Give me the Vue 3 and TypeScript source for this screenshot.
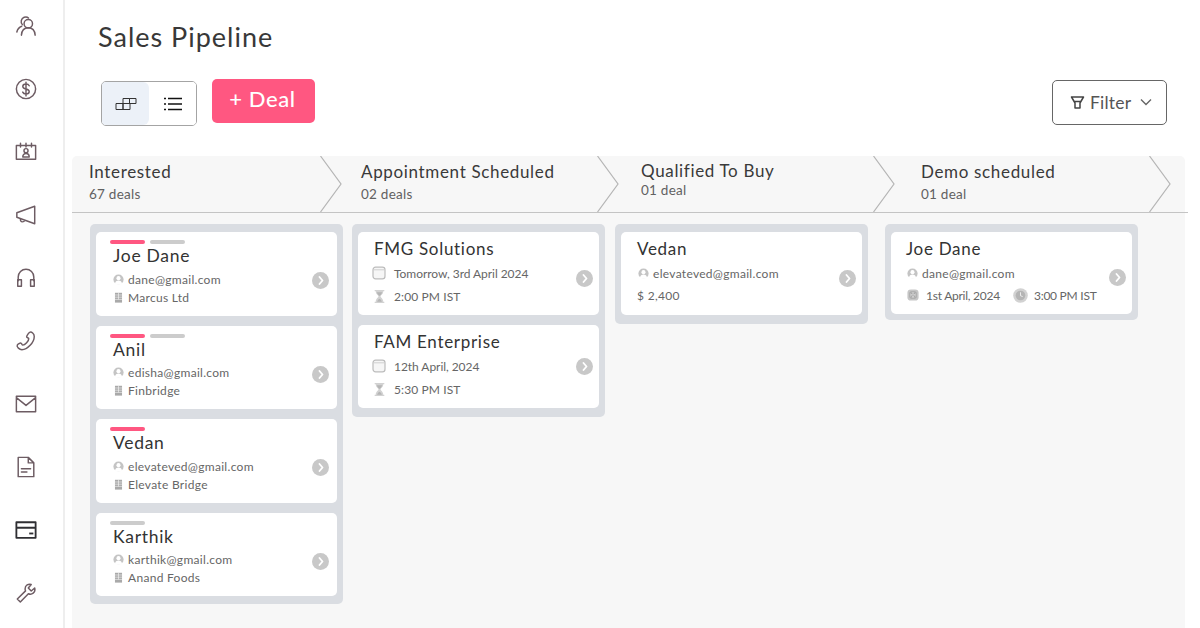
<script setup lang="ts">
type Row = { icon: string; text: string; icon2?: string; text2?: string }
type Card = { name: string; bars: string[]; rows: Row[]; arrow: number; gapped?: boolean }
type Column = { cls: string; cards: Card[] }

const navIcons = ['users', 'dollar', 'calendar', 'megaphone', 'headset', 'phone', 'mail', 'doc', 'card', 'wrench']

const stages = [
  { title: 'Interested', sub: '67 deals', cls: 's1' },
  { title: 'Appointment Scheduled', sub: '02 deals', cls: 's2' },
  { title: 'Qualified To Buy', sub: '01 deal', cls: 's3' },
  { title: 'Demo scheduled', sub: '01 deal', cls: 's4' }
]

const columns: Column[] = [
  {
    cls: 'c1',
    cards: [
      { name: 'Joe Dane', bars: ['pink', 'grey'], arrow: 32, rows: [{ icon: 'person', text: 'dane@gmail.com' }, { icon: 'building', text: 'Marcus Ltd' }] },
      { name: 'Anil', bars: ['pink', 'grey'], arrow: 32, rows: [{ icon: 'person', text: 'edisha@gmail.com' }, { icon: 'building', text: 'Finbridge' }] },
      { name: 'Vedan', bars: ['pink'], arrow: 32, rows: [{ icon: 'person', text: 'elevateved@gmail.com' }, { icon: 'building', text: 'Elevate Bridge' }] },
      { name: 'Karthik', bars: ['grey'], arrow: 32, rows: [{ icon: 'person', text: 'karthik@gmail.com' }, { icon: 'building', text: 'Anand Foods' }] }
    ]
  },
  {
    cls: 'c2',
    cards: [
      { name: 'FMG Solutions', bars: [], arrow: 31, gapped: true, rows: [{ icon: 'cal', text: 'Tomorrow, 3rd April 2024' }, { icon: 'glass', text: '2:00 PM IST' }] },
      { name: 'FAM Enterprise', bars: [], arrow: 26, gapped: true, rows: [{ icon: 'cal', text: '12th April, 2024' }, { icon: 'glass', text: '5:30 PM IST' }] }
    ]
  },
  {
    cls: 'c3',
    cards: [{ name: 'Vedan', bars: [], arrow: 31, rows: [{ icon: 'person', text: 'elevateved@gmail.com' }, { icon: 'none', text: '$ 2,400' }] }]
  },
  {
    cls: 'c4',
    cards: [{ name: 'Joe Dane', bars: [], arrow: 30, rows: [{ icon: 'person', text: 'dane@gmail.com' }, { icon: 'save', text: '1st April, 2024', icon2: 'clock', text2: '3:00 PM IST' }] }]
  }
]
</script>

<template>
  <div class="app">
    <nav class="side">
      <svg v-for="n in navIcons" :key="n" class="nav-icon" :class="{ dark: n === 'card' }" viewBox="0 0 24 24">
        <template v-if="n === 'users'">
          <circle cx="14.500" cy="9.500" r="4.600" /><path d="M7 22c.4-5 3.400-8 7.500-8s7.100 3 7.500 8" />
          <path d="M8 10.500A5 5 0 0 1 10 2.500c1.800-.7 3.500-.4 4.700.8M7.300 12.300c-2.800 1-4.500 3.200-5.300 6.200" />
        </template>
        <template v-else-if="n === 'dollar'">
          <circle cx="12" cy="12" r="10.500" /><path d="M15.500 8.500c-.6-1.300-2-2-3.500-2-2 0-3.500 1-3.500 2.700 0 3.800 7 1.800 7 5.600 0 1.700-1.500 2.700-3.500 2.700-1.600 0-3-.7-3.600-2.100M12 4.500v15" />
        </template>
        <template v-else-if="n === 'calendar'">
          <path d="M1.500 5h21v15h-21zM6 2.500v4M12 2.500v4M18 2.500v4" /><circle cx="12" cy="10.500" r="2.200" /><path d="M8.500 17.500c0-2.500 1.300-3.800 3.500-3.800s3.500 1.300 3.500 3.800z" />
        </template>
        <template v-else-if="n === 'megaphone'">
          <path d="M21.500 2.500v19L2 14.500v-5zM6 16c-.5 2 .5 3.500 2 3.500s2.300-.8 2.500-2" />
        </template>
        <template v-else-if="n === 'headset'">
          <path d="M3.500 15v-4a8.500 8.500 0 0 1 17 0v4" /><path d="M3 14h4v7H3zM17 14h4v7h-4z" />
        </template>
        <template v-else-if="n === 'phone'">
          <path d="M16 2.500c2-1 5 1.500 5 4.500 0 6.500-7.500 14.500-13.500 14.500-2.500 0-6-3-5-5 .6-1 3-2.500 4-2.200 1 .3 1 2.200 2 2.200 2.500 0 6.500-4.500 6.500-7 0-1-2.200-1-2.300-2C12.600 6.500 15 3 16 2.500z" />
        </template>
        <template v-else-if="n === 'mail'">
          <path d="M1.500 3.500h21v17h-21zM1.500 5l10.500 8.500L22.500 5" />
        </template>
        <template v-else-if="n === 'doc'">
          <path d="M3.500 1.500h11l6 6v15h-17zM14.500 1.500v6h6M7 14h10M7 17.500h6" />
        </template>
        <template v-else-if="n === 'card'">
          <path d="M1.500 3.500h21v17h-21zM1.500 9.500h21" /><path class="solid" d="M15.500 14.800h4.500v2h-4.500z" />
        </template>
        <template v-else>
          <path d="M21.500 6.500l-3.800 3.300-3.200-3.200 3.200-3.900c-3-1-6.700.8-6.700 4.800 0 .9.300 1.500.5 2.200L2.500 18.500l3.300 3.300 8.800-9c3.500 1.500 8.200-1 6.900-6.300z" />
        </template>
      </svg>
    </nav>

    <main class="main">
      <h1 class="title">Sales Pipeline</h1>

      <div class="toolbar">
        <div class="toggle">
          <button class="toggle-btn active" aria-label="Board view">
            <svg width="22" height="14" viewBox="0 0 22 14" class="line-icon">
              <path d="M1 6.500h7v6H1zM8 6.500h7v6H8zM8 1.500h6.500v5H8zM14.500 1.500H21v5h-6.500z" />
            </svg>
          </button>
          <button class="toggle-btn" aria-label="List view">
            <svg width="18" height="14" viewBox="0 0 18 14" class="list-icon">
              <path d="M0 1.500h2M4 1.500h14M0 7h2M4 7h14M0 12.500h2M4 12.500h14" />
            </svg>
          </button>
        </div>
        <button class="deal">+ Deal</button>
        <button class="filter">
          <svg width="15" height="15" viewBox="0 0 15 15" class="funnel">
            <path d="M1.500 2h12L10 8v5H5V8zM4 6.500h7" />
          </svg>
          <span>Filter</span>
          <svg width="12" height="8" viewBox="0 0 12 8" class="chev"><path d="M1 1.500l5 5 5-5" /></svg>
        </button>
      </div>

      <section class="board">
        <header class="stages">
          <div v-for="s in stages" :key="s.title" class="stage" :class="s.cls">
            <div class="stage-title">{{ s.title }}</div>
            <div class="stage-sub">{{ s.sub }}</div>
            <svg class="stage-arrow" width="22" height="56" viewBox="0 0 22 56"><path d="M0.500 0L21 28 0.500 56" /></svg>
          </div>
        </header>

        <div class="columns">
          <div v-for="col in columns" :key="col.cls" class="column" :class="col.cls">
            <article v-for="card in col.cards" :key="card.name" class="card" :class="{ lead: card.bars.length, gapped: card.gapped }">
              <div class="card-body">
                <div v-if="card.bars.length" class="bars">
                  <span v-for="b in card.bars" :key="b" class="bar" :class="b"></span>
                </div>
                <div class="name">{{ card.name }}</div>
                <div v-for="r in card.rows" :key="r.text" class="row">
                  <template v-for="(ic, i) in [r.icon, r.icon2]" :key="i">
                    <template v-if="ic">
                      <svg v-if="ic !== 'none'" class="ri" :class="ic" viewBox="0 0 14 14">
                        <template v-if="ic === 'person'">
                          <circle cx="7" cy="7" r="6.500" class="ring" /><circle cx="7" cy="5.300" r="2.600" class="white" /><path class="white" d="M2.500 12.500c.4-3 2-4.200 4.500-4.200s4.100 1.200 4.500 4.200c-1.200 1-2.800 1.200-4.500 1.200s-3.300-.2-4.500-1.200z" />
                        </template>
                        <template v-else-if="ic === 'building'">
                          <rect class="bld" x="2.500" y="1" width="9" height="12.500" /><path class="wl" d="M2.500 3.800h9M2.500 6.600h9M2.500 9.400h9M7 1v8.400" />
                        </template>
                        <template v-else-if="ic === 'cal'">
                          <rect x="1" y="1.200" width="12" height="11.600" rx="2.600" class="calbox" /><path class="calline" d="M1.500 3.800h11" />
                        </template>
                        <template v-else-if="ic === 'glass'">
                          <path class="fillp" d="M2.500 1h9v1.200H10.500C10.500 5 8 6 8 7s2.500 2 2.500 4.800h1V13h-9v-1.200h1C3.500 9 6 8 6 7S3.500 5 3.500 2.200h-1z" /><path class="fillg" d="M4.500 3h5C9 5 7.500 6 7 6.500 6.500 6 5 5 4.500 3zM7 9c1 .7 2 1.700 2.300 2.800H4.700C5 10.700 6 9.700 7 9z" />
                        </template>
                        <template v-else-if="ic === 'save'">
                          <rect x="0.500" y="0.500" width="13" height="13" rx="4" class="savebg" /><rect x="3.500" y="3.500" width="7" height="7" rx="1" class="savebox" /><path class="darkl" d="M5 4v1.800h4V4M5 10V8h4v2" />
                        </template>
                        <template v-else>
                          <circle cx="7" cy="7" r="6.800" class="fillp" /><circle cx="7" cy="7" r="4.500" class="fillg" /><path class="wl" d="M7 4v3.200l2 .8" />
                        </template>
                      </svg>
                      <span class="rt" :class="{ second: i === 1 }">{{ i === 0 ? r.text : r.text2 }}</span>
                    </template>
                  </template>
                </div>
              </div>
              <span class="go" :style="{ marginTop: card.arrow + 'px' }">
                <svg width="8" height="9" viewBox="0 0 8 9"><path d="M2.500 1l3 3.500-3 3.500" /></svg>
              </span>
            </article>
          </div>
        </div>
      </section>
    </main>
  </div>
</template>

<style>
html, body { margin: 0; background: #fff; }
</style>

<style scoped>
.app {
  display: flex;
  width: 1200px;
  height: 628px;
  overflow: hidden;
  background: #fff;
  font-family: Lato, "Noto Sans", sans-serif;
  color: #333;
}
.side {
  box-sizing: border-box;
  width: 65px;
  flex: none;
  height: 628px;
  padding: 15px 0 0 15px;
  display: flex;
  flex-direction: column;
  gap: 41px;
  border-right: 2px solid #eeeeee;
}
.nav-icon { width: 22px; height: 22px; fill: none; stroke: #6d5c63; stroke-width: 1.600; stroke-linejoin: round; stroke-linecap: round; flex: none; }
.nav-icon.dark { stroke: #2f2f33; stroke-width: 2; }
.solid { fill: #2f2f33; stroke: none; }
.main { flex: 1; min-width: 0; padding-left: 7px; }
.title {
  margin: 0;
  padding: 21px 0 0 26px;
  height: 57px;
  box-sizing: border-box;
  font-size: 27px;
  line-height: 32px;
  font-weight: 400;
  color: #383838;
  letter-spacing: 1px;
}
.toolbar { display: flex; align-items: flex-start; padding-left: 29px; padding-top: 22px; height: 99px; box-sizing: border-box; }
.toggle {
  box-sizing: border-box;
  width: 96px;
  height: 45px;
  margin-top: 2px;
  display: flex;
  border: 1px solid #a4a4a4;
  border-radius: 5px;
  overflow: hidden;
}
.toggle-btn { width: 47px; border: 0; padding: 0; background: #fff; display: flex; align-items: center; justify-content: center; }
.toggle-btn.active { background: #ecf1f8; border-radius: 0 6px 6px 0; }
.line-icon { fill: none; stroke: #333; stroke-width: 1; }
.list-icon { fill: none; stroke: #111; stroke-width: 1.500; }
.deal {
  margin-left: 15px;
  width: 103px;
  height: 44px;
  box-sizing: border-box;
  border: 0;
  border-radius: 5px;
  background: #ff5781;
  color: #fff;
  font: 500 22px/40px Lato, sans-serif;
  letter-spacing: 0.6px;
  padding: 0 2px 4px 0;
}
.filter {
  margin-left: auto;
  margin-right: 33px;
  box-sizing: border-box;
  width: 115px;
  height: 45px;
  margin-top: 1px;
  background: #fff;
  border: 1px solid #666;
  border-radius: 5px;
  display: flex;
  align-items: center;
  padding: 0 0 1px 17px;
  font: 400 17.500px Lato, sans-serif;
  color: #555;
  letter-spacing: 0.2px;
}
.filter span { margin-left: 5px; }
.funnel { fill: none; stroke: #444; stroke-width: 1.500; stroke-linejoin: round; }
.chev { fill: none; stroke: #666; stroke-width: 1.400; margin-left: 9px; }
.board {
  width: 1113px;
  height: 472px;
  background: #f7f7f7;
  border-radius: 5px 5px 0 0;
}
.stages { display: flex; height: 56px; width: 1116px; border-bottom: 1px solid #c4c4c4; box-sizing: content-box; }
.stage { position: relative; flex: none; box-sizing: border-box; height: 56px; }
.s1 { width: 270px; padding: 6px 0 0 17px; }
.s2 { width: 277px; padding: 6px 0 0 19px; }
.s3 { width: 276px; padding: 5px 0 0 22px; }
.s4 { width: 276px; padding: 6px 0 0 26px; }
.s3 .stage-sub { margin-top: 0; }
.stage-title { font-size: 17px; line-height: 20px; color: #3a3a3a; letter-spacing: 0.66px; font-weight: 400; }
.stage-sub { margin-top: 3px; font-size: 13.500px; line-height: 18px; color: #616161; letter-spacing: 0.25px; }
.stage-arrow { position: absolute; right: 0; top: 0; fill: none; stroke: #b5b5b5; stroke-width: 1.200; }
.columns { display: flex; align-items: flex-start; padding: 11px 0 0 18px; }
.column {
  flex: none;
  width: 253px;
  box-sizing: border-box;
  padding: 8px 6px 9px;
  background: #dadde2;
  border-radius: 5px;
  display: flex;
  flex-direction: column;
  gap: 10px;
}
.c1 { padding-bottom: 8px; }
.c2 { margin-left: 9px; }
.c3 { margin-left: 10px; }
.c4 { margin-left: 17px; padding-bottom: 6px; }
.card {
  box-sizing: border-box;
  height: 83px;
  background: #fff;
  border-radius: 5px;
  display: flex;
  justify-content: space-between;
  padding: 7px 6px 0 16px;
}
.c1 .card { height: 83.500px; }
.c4 .card { height: 82px; padding-left: 15px; }
.card.lead { padding: 8px 8px 0 14px; }
.bars { display: flex; gap: 5px; height: 4px; }
.bar { width: 35px; height: 4px; border-radius: 2px; }
.bar.pink { background: #ff5781; }
.bar.grey { background: #cccccc; }
.name { font-size: 17px; line-height: 20px; color: #333; font-weight: 400; letter-spacing: 0.7px; }
.lead .name { margin: 2px 0 5px 3px; font-size: 17.500px; }
.row { display: flex; align-items: center; height: 16px; margin-top: 6px; font-size: 12px; color: #666; letter-spacing: 0.3px; white-space: nowrap; }
.name + .row + .row { margin-top: 6px; }
.gapped .name + .row + .row { margin-top: 7px; }
.lead .row { margin-top: 2px; margin-left: 3px; }
.lead .name + .row { margin-top: 0; }
.lead .name + .row + .row { margin-top: 2px; }
.ri { width: 11px; height: 11px; flex: none; margin-right: 5px; margin-left: 0; }
.lead .ri { margin-right: 4px; }
.c3 .ri, .c4 .ri { margin-left: 1px; margin-right: 4px; }
.ri.cal { width: 14px; height: 14px; margin-left: -2px; margin-right: 8px; }
.ri.glass { width: 15px; height: 15px; margin-left: -2px; margin-right: 7px; }
.c4 .ri.save { width: 12px; height: 12px; margin-right: 7px; margin-left: 1px; }
.c4 .ri.clock { width: 15px; height: 15px; margin-left: 13px; margin-right: 6px; }
.c4 .name + .row + .row .rt { letter-spacing: -0.25px; }
.gapped .row { letter-spacing: 0.1px; }
.gapped .name + .row { letter-spacing: -0.05px; }
.gapped .name + .row + .row { letter-spacing: 0.1px; }
.ring { fill: #c4c4c4; }
.fillg { fill: #b5b5b5; }
.fillp { fill: #d2d2d2; }
.bld { fill: #a9a9a9; }
.white { fill: #fff; }
.wl { fill: none; stroke: #fff; stroke-width: 0.700; }
.darkl { fill: none; stroke: #8a8a8a; stroke-width: 0.800; }
.calbox { fill: #f6f6f6; stroke: #bcbcbc; stroke-width: 1.200; }
.calline { fill: none; stroke: #d0d0d0; stroke-width: 1; }
.savebg { fill: #c6c6c6; }
.savebox { fill: #e2e2e2; stroke: #8a8a8a; stroke-width: 0.800; }
.go {
  flex: none;
  width: 17px;
  height: 17px;
  border-radius: 50%;
  background: #c8c8c8;
  display: flex;
  align-items: center;
  justify-content: center;
}
.go svg { fill: none; stroke: #fff; stroke-width: 1.800; stroke-linecap: round; stroke-linejoin: round; }
</style>
